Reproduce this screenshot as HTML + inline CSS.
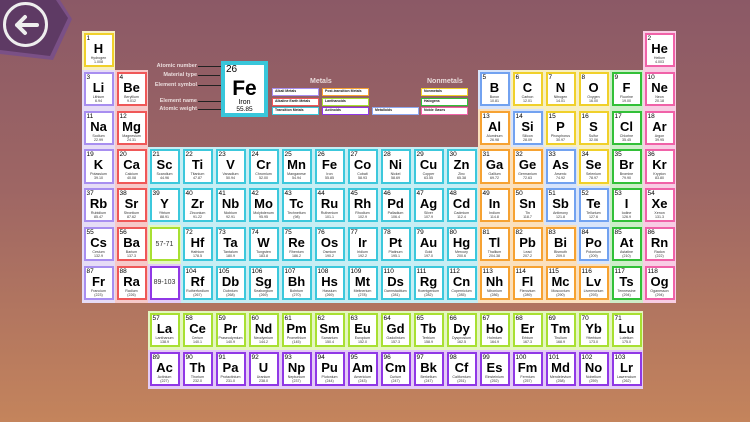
<!DOCTYPE html><html><head><meta charset="utf-8"><style>
*{margin:0;padding:0;box-sizing:border-box}
body{width:750px;height:422px;overflow:hidden;position:relative;font-family:"Liberation Sans",sans-serif;background:linear-gradient(180deg,#8b5966 0%,#9e6664 45%,#c4845c 100%)}
.btn{position:absolute;left:0;top:0;width:68px;height:56px;background:#5e3a64;clip-path:polygon(0 0,56px 0,68px 18px,50px 56px,0 50px);}
.btn2{position:absolute;left:0;top:0;width:72px;height:60px;background:#7a5086;clip-path:polygon(0 0,60px 0,72px 19px,53px 60px,0 54px);}
.circ{position:absolute;left:3px;top:2px;width:45px;height:45px;border:3px solid #eee;border-radius:50%}
.g{position:absolute;left:82px;top:31px;display:grid;grid-template-columns:repeat(18,33px);grid-template-rows:repeat(7,38.8px)}
.g2{position:absolute;left:148px;top:311px;display:grid;grid-template-columns:repeat(15,33px);grid-template-rows:repeat(2,38.8px)}
.x{position:relative;padding:2px 1.5px 2.5px}
.x>div{position:relative;height:100%;background:#fff;border:2.5px solid;text-align:center;color:#000;overflow:hidden}
.x b{position:absolute;left:1px;top:0;font-size:6.5px;font-weight:normal;line-height:7px}
.x i{position:absolute;left:0;right:0;top:7px;font-style:normal;font-weight:bold;font-size:13px;line-height:13px}
.x s{position:absolute;left:-2px;right:-2px;top:21px;text-decoration:none;font-size:3.6px;line-height:4px;color:#333}
.x u{position:absolute;left:0;right:0;top:25px;text-decoration:none;font-size:3.6px;line-height:4px;color:#333}
.ph>div{display:flex;align-items:center;justify-content:center;font-size:7px;color:#333}
.a{background:#e6dcf6}.a>div{border-color:#a88ef0}
.e{background:#f6c9c9}.e>div{border-color:#ef5858}
.t{background:#c6eef4}.t>div{border-color:#3cc8dc}
.p{background:#fbe0bc}.p>div{border-color:#f6a232}
.m{background:#d8e4fa}.m>div{border-color:#72a2f0}
.n{background:#f7efc2}.n>div{border-color:#f0d02a}
.h{background:#cdeec8}.h>div{border-color:#32c038}
.o{background:#f8cde4}.o>div{border-color:#f062a8}
.l{background:#e4f6c0}.l>div{border-color:#a8e032}
.c{background:#e4cbf6}.c>div{border-color:#9038e6}
.lab{position:absolute;right:553px;font-size:5.5px;font-weight:bold;color:#eadcdc;white-space:nowrap}
.ln{position:absolute;left:198px;height:1px;background:#222}
.fe{position:absolute;left:221px;top:61px;width:47px;height:56px;background:#fff;border:4px solid #38c6da}
.lg{position:absolute;height:8px;width:47px;background:#fff;border:1.5px solid;font-size:3.5px;font-weight:bold;line-height:5px;padding-left:2px;color:#222}
.tt{position:absolute;font-size:7px;font-weight:bold;color:#eadcdc}
</style></head><body>
<div class="btn2"></div>
<div class="btn"></div>
<div class="circ"></div>
<svg style="position:absolute;left:9px;top:10px" width="34" height="30"><path d="M8 15 H28 M8 15 L16 7 M8 15 L16 23" stroke="#eee" stroke-width="4" fill="none" stroke-linecap="round" stroke-linejoin="round"/></svg>

<div class="lab" style="top:63px">Atomic number</div><div class="ln" style="top:66px;width:30px"></div>
<div class="lab" style="top:72px">Material type</div><div class="ln" style="top:75px;width:22px"></div>
<div class="lab" style="top:82px">Element symbol</div><div class="ln" style="top:85px;width:36px"></div>
<div class="lab" style="top:98px">Element name</div><div class="ln" style="top:101px;width:38px"></div>
<div class="lab" style="top:106px">Atomic weight</div><div class="ln" style="top:109px;width:36px"></div>
<div class="fe"><div style="position:absolute;left:1px;top:-1px;font-size:10px">26</div><div style="position:absolute;left:0;right:0;top:12px;text-align:center;font-weight:bold;font-size:21px">Fe</div><div style="position:absolute;left:0;right:0;top:34px;text-align:center;font-size:7px">Iron</div><div style="position:absolute;left:0;right:0;top:41px;text-align:center;font-size:6.5px">55.85</div></div>

<div class="tt" style="left:310px;top:78px">Metals</div>
<div class="tt" style="left:427px;top:78px">Nonmetals</div>
<div class="lg" style="left:272px;top:88px;border-color:#a88ef0">Alkali Metals</div>
<div class="lg" style="left:272px;top:98px;border-color:#ef5858">Alkaline Earth Metals</div>
<div class="lg" style="left:272px;top:107px;border-color:#3cc8dc">Transition Metals</div>
<div class="lg" style="left:322px;top:88px;border-color:#f6a232">Post-transition Metals</div>
<div class="lg" style="left:322px;top:98px;border-color:#a8e032">Lanthanoids</div>
<div class="lg" style="left:322px;top:107px;border-color:#9038e6">Actinoids</div>
<div class="lg" style="left:372px;top:107px;border-color:#8ea8f0">Metalloids</div>
<div class="lg" style="left:421px;top:88px;border-color:#f0d02a">Nonmetals</div>
<div class="lg" style="left:421px;top:98px;border-color:#32c038">Halogens</div>
<div class="lg" style="left:421px;top:107px;border-color:#f062a8">Noble Gases</div>

<div class="g">
<div class="x n"><div><b>1</b><i>H</i><s>Hydrogen</s><u>1.008</u></div></div>
<div class="x o" style="grid-column:18"><div><b>2</b><i>He</i><s>Helium</s><u>4.003</u></div></div>
<div class="x a"><div><b>3</b><i>Li</i><s>Lithium</s><u>6.94</u></div></div>
<div class="x e"><div><b>4</b><i>Be</i><s>Beryllium</s><u>9.012</u></div></div>
<div class="x m" style="grid-column:13"><div><b>5</b><i>B</i><s>Boron</s><u>10.81</u></div></div>
<div class="x n"><div><b>6</b><i>C</i><s>Carbon</s><u>12.01</u></div></div>
<div class="x n"><div><b>7</b><i>N</i><s>Nitrogen</s><u>14.01</u></div></div>
<div class="x n"><div><b>8</b><i>O</i><s>Oxygen</s><u>16.00</u></div></div>
<div class="x h"><div><b>9</b><i>F</i><s>Fluorine</s><u>19.00</u></div></div>
<div class="x o"><div><b>10</b><i>Ne</i><s>Neon</s><u>20.18</u></div></div>
<div class="x a"><div><b>11</b><i>Na</i><s>Sodium</s><u>22.99</u></div></div>
<div class="x e"><div><b>12</b><i>Mg</i><s>Magnesium</s><u>24.31</u></div></div>
<div class="x p" style="grid-column:13"><div><b>13</b><i>Al</i><s>Aluminum</s><u>26.98</u></div></div>
<div class="x m"><div><b>14</b><i>Si</i><s>Silicon</s><u>28.09</u></div></div>
<div class="x n"><div><b>15</b><i>P</i><s>Phosphorus</s><u>30.97</u></div></div>
<div class="x n"><div><b>16</b><i>S</i><s>Sulfur</s><u>32.06</u></div></div>
<div class="x h"><div><b>17</b><i>Cl</i><s>Chlorine</s><u>35.45</u></div></div>
<div class="x o"><div><b>18</b><i>Ar</i><s>Argon</s><u>39.95</u></div></div>
<div class="x a"><div><b>19</b><i>K</i><s>Potassium</s><u>39.10</u></div></div>
<div class="x e"><div><b>20</b><i>Ca</i><s>Calcium</s><u>40.08</u></div></div>
<div class="x t"><div><b>21</b><i>Sc</i><s>Scandium</s><u>44.96</u></div></div>
<div class="x t"><div><b>22</b><i>Ti</i><s>Titanium</s><u>47.87</u></div></div>
<div class="x t"><div><b>23</b><i>V</i><s>Vanadium</s><u>50.94</u></div></div>
<div class="x t"><div><b>24</b><i>Cr</i><s>Chromium</s><u>52.00</u></div></div>
<div class="x t"><div><b>25</b><i>Mn</i><s>Manganese</s><u>54.94</u></div></div>
<div class="x t"><div><b>26</b><i>Fe</i><s>Iron</s><u>55.85</u></div></div>
<div class="x t"><div><b>27</b><i>Co</i><s>Cobalt</s><u>58.93</u></div></div>
<div class="x t"><div><b>28</b><i>Ni</i><s>Nickel</s><u>58.69</u></div></div>
<div class="x t"><div><b>29</b><i>Cu</i><s>Copper</s><u>63.55</u></div></div>
<div class="x t"><div><b>30</b><i>Zn</i><s>Zinc</s><u>65.38</u></div></div>
<div class="x p"><div><b>31</b><i>Ga</i><s>Gallium</s><u>69.72</u></div></div>
<div class="x p"><div><b>32</b><i>Ge</i><s>Germanium</s><u>72.63</u></div></div>
<div class="x m"><div><b>33</b><i>As</i><s>Arsenic</s><u>74.92</u></div></div>
<div class="x n"><div><b>34</b><i>Se</i><s>Selenium</s><u>78.97</u></div></div>
<div class="x h"><div><b>35</b><i>Br</i><s>Bromine</s><u>79.90</u></div></div>
<div class="x o"><div><b>36</b><i>Kr</i><s>Krypton</s><u>83.80</u></div></div>
<div class="x a"><div><b>37</b><i>Rb</i><s>Rubidium</s><u>85.47</u></div></div>
<div class="x e"><div><b>38</b><i>Sr</i><s>Strontium</s><u>87.62</u></div></div>
<div class="x t"><div><b>39</b><i>Y</i><s>Yttrium</s><u>88.91</u></div></div>
<div class="x t"><div><b>40</b><i>Zr</i><s>Zirconium</s><u>91.22</u></div></div>
<div class="x t"><div><b>41</b><i>Nb</i><s>Niobium</s><u>92.91</u></div></div>
<div class="x t"><div><b>42</b><i>Mo</i><s>Molybdenum</s><u>95.95</u></div></div>
<div class="x t"><div><b>43</b><i>Tc</i><s>Technetium</s><u>(98)</u></div></div>
<div class="x t"><div><b>44</b><i>Ru</i><s>Ruthenium</s><u>101.1</u></div></div>
<div class="x t"><div><b>45</b><i>Rh</i><s>Rhodium</s><u>102.9</u></div></div>
<div class="x t"><div><b>46</b><i>Pd</i><s>Palladium</s><u>106.4</u></div></div>
<div class="x t"><div><b>47</b><i>Ag</i><s>Silver</s><u>107.9</u></div></div>
<div class="x t"><div><b>48</b><i>Cd</i><s>Cadmium</s><u>112.4</u></div></div>
<div class="x p"><div><b>49</b><i>In</i><s>Indium</s><u>114.8</u></div></div>
<div class="x p"><div><b>50</b><i>Sn</i><s>Tin</s><u>118.7</u></div></div>
<div class="x m"><div><b>51</b><i>Sb</i><s>Antimony</s><u>121.8</u></div></div>
<div class="x m"><div><b>52</b><i>Te</i><s>Tellurium</s><u>127.6</u></div></div>
<div class="x h"><div><b>53</b><i>I</i><s>Iodine</s><u>126.9</u></div></div>
<div class="x o"><div><b>54</b><i>Xe</i><s>Xenon</s><u>131.3</u></div></div>
<div class="x a"><div><b>55</b><i>Cs</i><s>Cesium</s><u>132.9</u></div></div>
<div class="x e"><div><b>56</b><i>Ba</i><s>Barium</s><u>137.3</u></div></div>
<div class="x l ph"><div>57-71</div></div>
<div class="x t"><div><b>72</b><i>Hf</i><s>Hafnium</s><u>178.5</u></div></div>
<div class="x t"><div><b>73</b><i>Ta</i><s>Tantalum</s><u>180.9</u></div></div>
<div class="x t"><div><b>74</b><i>W</i><s>Tungsten</s><u>183.8</u></div></div>
<div class="x t"><div><b>75</b><i>Re</i><s>Rhenium</s><u>186.2</u></div></div>
<div class="x t"><div><b>76</b><i>Os</i><s>Osmium</s><u>190.2</u></div></div>
<div class="x t"><div><b>77</b><i>Ir</i><s>Iridium</s><u>192.2</u></div></div>
<div class="x t"><div><b>78</b><i>Pt</i><s>Platinum</s><u>195.1</u></div></div>
<div class="x t"><div><b>79</b><i>Au</i><s>Gold</s><u>197.0</u></div></div>
<div class="x t"><div><b>80</b><i>Hg</i><s>Mercury</s><u>200.6</u></div></div>
<div class="x p"><div><b>81</b><i>Tl</i><s>Thallium</s><u>204.38</u></div></div>
<div class="x p"><div><b>82</b><i>Pb</i><s>Lead</s><u>207.2</u></div></div>
<div class="x p"><div><b>83</b><i>Bi</i><s>Bismuth</s><u>209.0</u></div></div>
<div class="x m"><div><b>84</b><i>Po</i><s>Polonium</s><u>(209)</u></div></div>
<div class="x h"><div><b>85</b><i>At</i><s>Astatine</s><u>(210)</u></div></div>
<div class="x o"><div><b>86</b><i>Rn</i><s>Radon</s><u>(222)</u></div></div>
<div class="x a"><div><b>87</b><i>Fr</i><s>Francium</s><u>(223)</u></div></div>
<div class="x e"><div><b>88</b><i>Ra</i><s>Radium</s><u>(226)</u></div></div>
<div class="x c ph"><div>89-103</div></div>
<div class="x t"><div><b>104</b><i>Rf</i><s>Rutherfordium</s><u>(267)</u></div></div>
<div class="x t"><div><b>105</b><i>Db</i><s>Dubnium</s><u>(268)</u></div></div>
<div class="x t"><div><b>106</b><i>Sg</i><s>Seaborgium</s><u>(269)</u></div></div>
<div class="x t"><div><b>107</b><i>Bh</i><s>Bohrium</s><u>(270)</u></div></div>
<div class="x t"><div><b>108</b><i>Hs</i><s>Hassium</s><u>(269)</u></div></div>
<div class="x t"><div><b>109</b><i>Mt</i><s>Meitnerium</s><u>(278)</u></div></div>
<div class="x t"><div><b>110</b><i>Ds</i><s>Darmstadtium</s><u>(281)</u></div></div>
<div class="x t"><div><b>111</b><i>Rg</i><s>Roentgenium</s><u>(282)</u></div></div>
<div class="x t"><div><b>112</b><i>Cn</i><s>Copernicium</s><u>(285)</u></div></div>
<div class="x p"><div><b>113</b><i>Nh</i><s>Nihonium</s><u>(286)</u></div></div>
<div class="x p"><div><b>114</b><i>Fl</i><s>Flerovium</s><u>(289)</u></div></div>
<div class="x p"><div><b>115</b><i>Mc</i><s>Moscovium</s><u>(290)</u></div></div>
<div class="x p"><div><b>116</b><i>Lv</i><s>Livermorium</s><u>(293)</u></div></div>
<div class="x h"><div><b>117</b><i>Ts</i><s>Tennessine</s><u>(294)</u></div></div>
<div class="x o"><div><b>118</b><i>Og</i><s>Oganesson</s><u>(294)</u></div></div>
</div>
<div class="g2">
<div class="x l"><div><b>57</b><i>La</i><s>Lanthanum</s><u>138.9</u></div></div>
<div class="x l"><div><b>58</b><i>Ce</i><s>Cerium</s><u>140.1</u></div></div>
<div class="x l"><div><b>59</b><i>Pr</i><s>Praseodymium</s><u>140.9</u></div></div>
<div class="x l"><div><b>60</b><i>Nd</i><s>Neodymium</s><u>144.2</u></div></div>
<div class="x l"><div><b>61</b><i>Pm</i><s>Promethium</s><u>(145)</u></div></div>
<div class="x l"><div><b>62</b><i>Sm</i><s>Samarium</s><u>150.4</u></div></div>
<div class="x l"><div><b>63</b><i>Eu</i><s>Europium</s><u>152.0</u></div></div>
<div class="x l"><div><b>64</b><i>Gd</i><s>Gadolinium</s><u>157.3</u></div></div>
<div class="x l"><div><b>65</b><i>Tb</i><s>Terbium</s><u>158.9</u></div></div>
<div class="x l"><div><b>66</b><i>Dy</i><s>Dysprosium</s><u>162.5</u></div></div>
<div class="x l"><div><b>67</b><i>Ho</i><s>Holmium</s><u>164.9</u></div></div>
<div class="x l"><div><b>68</b><i>Er</i><s>Erbium</s><u>167.3</u></div></div>
<div class="x l"><div><b>69</b><i>Tm</i><s>Thulium</s><u>168.9</u></div></div>
<div class="x l"><div><b>70</b><i>Yb</i><s>Ytterbium</s><u>173.0</u></div></div>
<div class="x l"><div><b>71</b><i>Lu</i><s>Lutetium</s><u>175.0</u></div></div>
<div class="x c"><div><b>89</b><i>Ac</i><s>Actinium</s><u>(227)</u></div></div>
<div class="x c"><div><b>90</b><i>Th</i><s>Thorium</s><u>232.0</u></div></div>
<div class="x c"><div><b>91</b><i>Pa</i><s>Protactinium</s><u>231.0</u></div></div>
<div class="x c"><div><b>92</b><i>U</i><s>Uranium</s><u>238.0</u></div></div>
<div class="x c"><div><b>93</b><i>Np</i><s>Neptunium</s><u>(237)</u></div></div>
<div class="x c"><div><b>94</b><i>Pu</i><s>Plutonium</s><u>(244)</u></div></div>
<div class="x c"><div><b>95</b><i>Am</i><s>Americium</s><u>(243)</u></div></div>
<div class="x c"><div><b>96</b><i>Cm</i><s>Curium</s><u>(247)</u></div></div>
<div class="x c"><div><b>97</b><i>Bk</i><s>Berkelium</s><u>(247)</u></div></div>
<div class="x c"><div><b>98</b><i>Cf</i><s>Californium</s><u>(251)</u></div></div>
<div class="x c"><div><b>99</b><i>Es</i><s>Einsteinium</s><u>(252)</u></div></div>
<div class="x c"><div><b>100</b><i>Fm</i><s>Fermium</s><u>(257)</u></div></div>
<div class="x c"><div><b>101</b><i>Md</i><s>Mendelevium</s><u>(258)</u></div></div>
<div class="x c"><div><b>102</b><i>No</i><s>Nobelium</s><u>(259)</u></div></div>
<div class="x c"><div><b>103</b><i>Lr</i><s>Lawrencium</s><u>(262)</u></div></div>
</div>
</body></html>
